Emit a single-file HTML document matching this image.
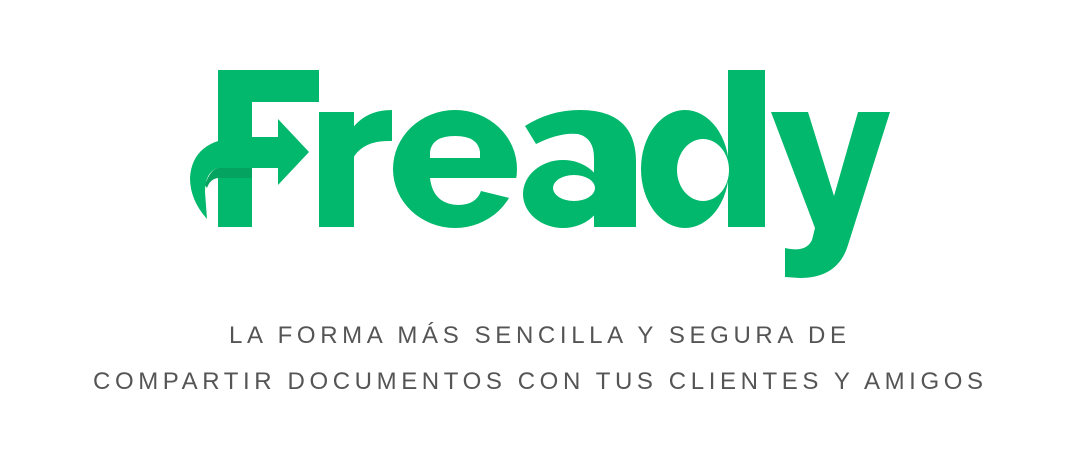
<!DOCTYPE html>
<html><head><meta charset="utf-8"><style>
html,body{margin:0;padding:0;background:#fff;}
svg{display:block;}
</style></head><body>
<svg width="1089" height="471" viewBox="0 0 1089 471" xmlns="http://www.w3.org/2000/svg">
<g fill="#02b86c">
<rect x="218" y="70" width="34" height="157"/>
<rect x="218" y="70" width="101" height="32"/>
<path d="M278,119 L309,152 L278,185 L278,168 L218,168 Q205,172 205,192 L207,219 Q190,200 190,178 Q192,140 240,137 L278,137 Z"/>
<rect x="319" y="112" width="35" height="115"/>
<path d="M348,135 Q362,110 392,110 L392,141 Q362,140 352,160 Z"/>
<ellipse cx="455" cy="169" rx="62" ry="59"/>
<path d="M525,126 L536,144 Q560,132 578,134 Q594,138 594,158 L594,227 L636,227 L636,162 Q636,110 580,110 Q550,110 525,126 Z"/>
<ellipse cx="563" cy="194" rx="40" ry="34"/>
<ellipse cx="685" cy="169" rx="44" ry="59"/>
<rect x="728" y="70" width="37" height="157"/>
<path d="M771,112 L808,112 L834,196 L858,112 L890,112 L848,245 Q838,278 800,278 L785,277 L785,248 Q806,253 812,240 L815,228 Z"/>
</g>
<path d="M205,185 Q210,170 218,168 L252,168 L252,178 L218,178 Q210,179 207,188 Z" fill="#04a35f"/>
<g fill="#fff">
<path d="M430,158 L430,152 Q432,136 455,136 Q478,136 480,152 L480,158 Z"/>
<path d="M430,178 Q433,204 458,205 Q476,205 481,191 L522,201 L522,178 Z"/>
<ellipse cx="574" cy="188" rx="21" ry="13"/>
<ellipse cx="703" cy="170" rx="26" ry="31"/>
<rect x="636" y="100" width="4" height="130"/>
</g>
<g font-family="'Liberation Sans',sans-serif" font-size="24" fill="#555">
<text x="229" y="343" textLength="617" lengthAdjust="spacing">LA FORMA MÁS SENCILLA Y SEGURA DE</text>
<text x="93" y="389" textLength="890" lengthAdjust="spacing">COMPARTIR DOCUMENTOS CON TUS CLIENTES Y AMIGOS</text>
</g>
</svg>
</body></html>
